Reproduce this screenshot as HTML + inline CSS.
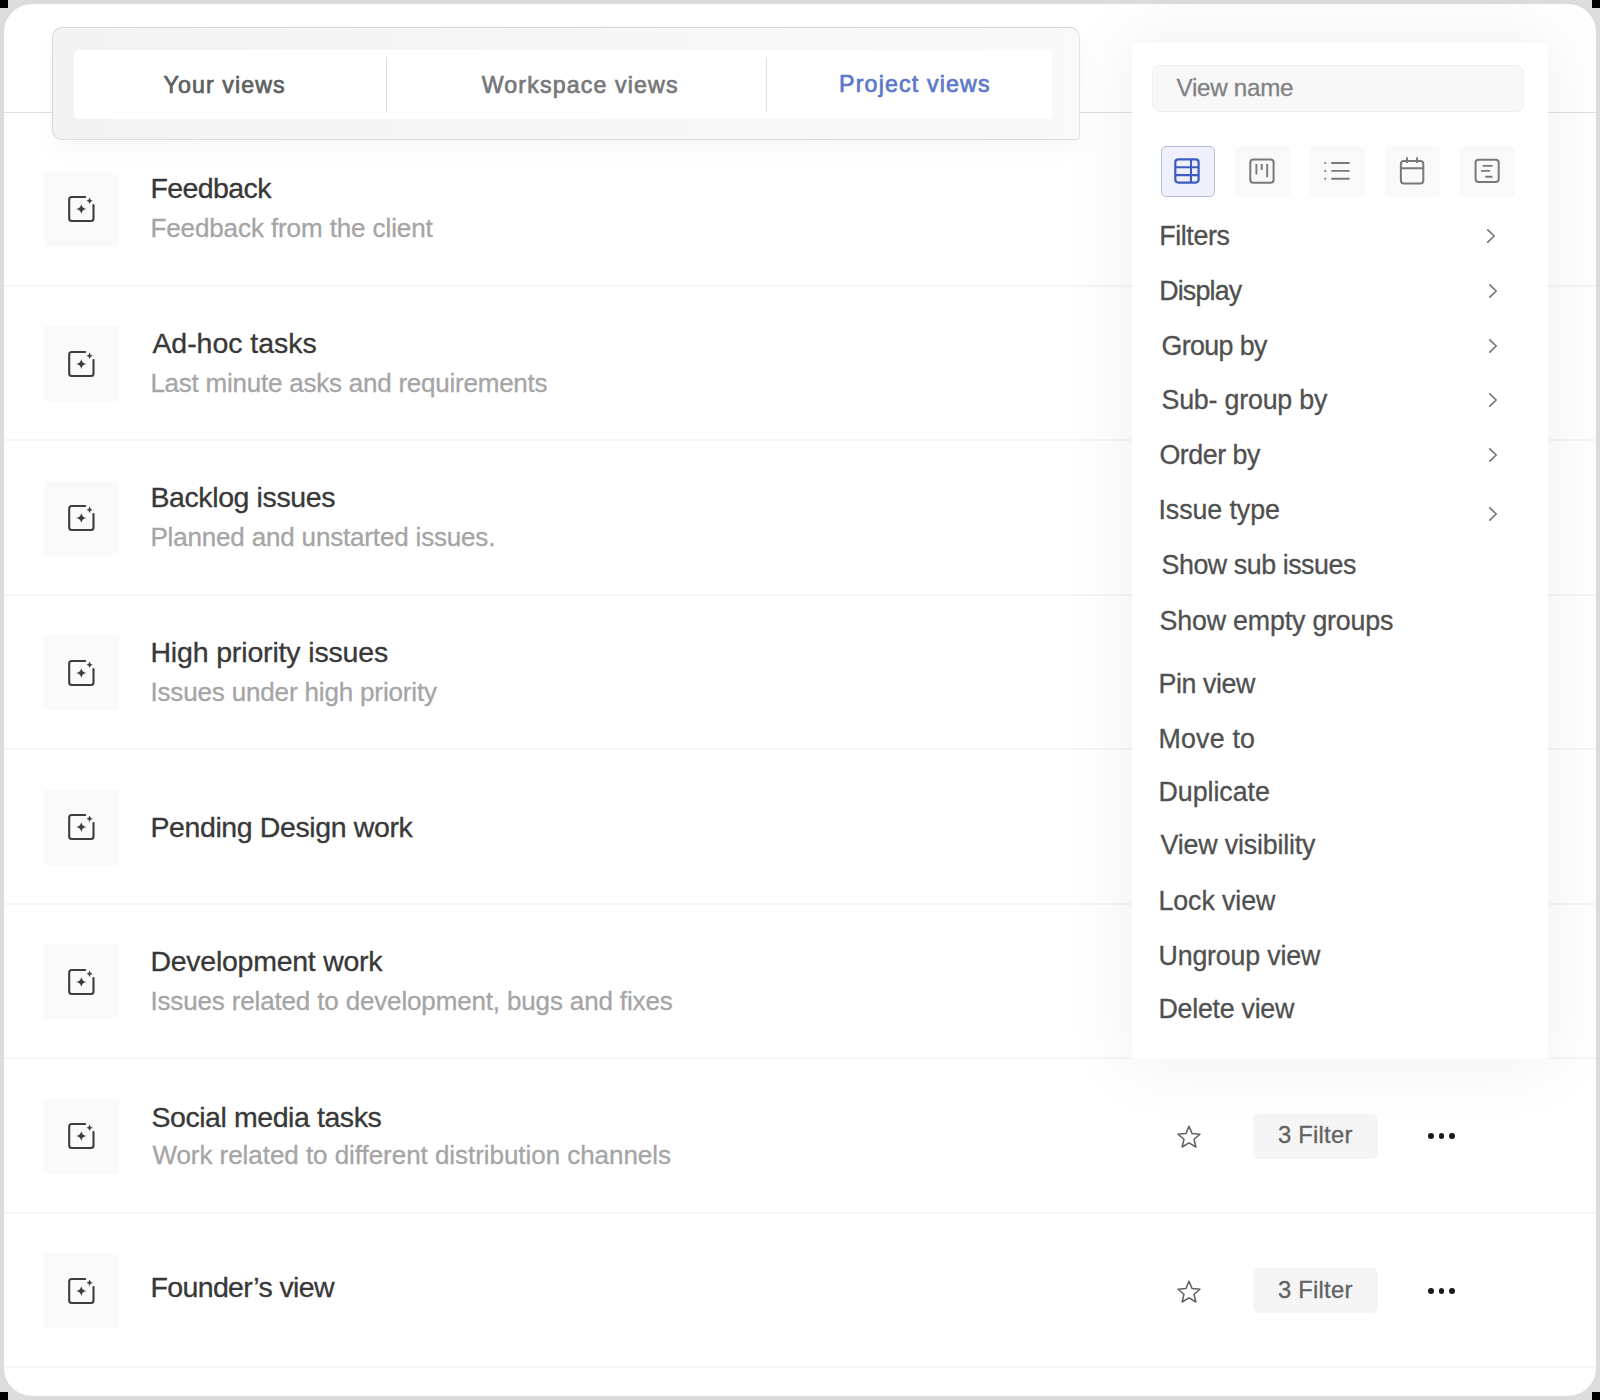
<!DOCTYPE html>
<html><head><meta charset="utf-8"><style>
*{margin:0;padding:0;box-sizing:border-box}
html,body{width:1600px;height:1400px;overflow:hidden;background:#dcdcdc;font-family:"Liberation Sans",sans-serif}
.corner{position:absolute;width:8px;height:8px;background:#000}
.card{position:absolute;left:4px;top:4px;width:1592px;height:1392px;background:#fff;border-radius:28px;overflow:hidden}
.t{position:absolute;white-space:nowrap;-webkit-text-stroke-width:0.3px}
.sep{position:absolute;left:4px;width:1592px;height:2px;background:#f6f6f6}
.ibox{position:absolute;left:44px;width:75px;height:75px;background:#fafafa;border-radius:2px}
.ric{position:absolute;left:60px}
.star{position:absolute;left:1175px}
.chip{position:absolute;left:1252.5px;width:125.5px;height:45px;background:#f5f5f5;border-radius:6px}
.dots{position:absolute;left:1427px;width:30px;height:6px}
.dots i{position:absolute;top:0;width:5.8px;height:5.8px;border-radius:50%;background:#1a1a1a}
.dots i:nth-child(1){left:1.1px} .dots i:nth-child(2){left:11.5px} .dots i:nth-child(3){left:22px}
.hdrline{position:absolute;left:4px;top:112px;width:1592px;height:1px;background:#e2e2e2}
.tabs{position:absolute;left:52px;top:27px;width:1028px;height:113px;background:linear-gradient(90deg,#f4f3f3,#f7f7f8 60%,#f9f9fa);border:1px solid #d6d4d4;border-right-color:#e4e4e6;border-bottom-color:#dcdcde;border-radius:10px 10px 4px 10px;box-shadow:0 10px 24px rgba(0,0,0,0.035)}
.tabin{position:absolute;left:74px;top:49.5px;width:978px;height:69.5px;background:#fff;border-radius:4px}
.vdiv{position:absolute;top:57px;width:1.6px;height:55px;background:#dedede}
.menu{position:absolute;left:1132px;top:43px;width:416px;height:1016px;background:#fff;border-radius:2px;box-shadow:0 0 70px 8px rgba(0,0,0,0.06)}
.inp{position:absolute;left:1152px;top:65px;width:372px;height:47px;background:#f8f8f8;border:1px solid #efefef;border-radius:8px}
.vb{position:absolute;top:145.5px;width:55px;height:51px;background:#f9f9fa;border-radius:5px}
.vb.sel{background:#eef0fb;border:1px solid #b4badf}

.chev{position:absolute;left:1483px}
</style></head><body>
<div class="corner" style="left:0;top:0"></div><div class="corner" style="right:0;top:0"></div>
<div class="corner" style="left:0;bottom:0"></div><div class="corner" style="right:0;bottom:0"></div>
<div class="card"></div>
<div class="hdrline"></div>
<div class="sep" style="top:285.0px"></div><div class="ibox" style="top:171.5px"></div><svg class="ric" style="top:189.0px" width="40" height="40" viewBox="0 0 40 40"><path d="M25.2 8.05 H11.7 a2.5 2.5 0 0 0 -2.5 2.5 V29.45 a2.5 2.5 0 0 0 2.5 2.5 H31 a2.5 2.5 0 0 0 2.5 -2.5 V16" fill="none" stroke="#3d3d3d" stroke-width="2.1" stroke-linecap="round"/><path d="M21.3 15.000000000000002 Q21.989 19.437 26.6 20.1 Q21.989 20.763 21.3 25.200000000000003 Q20.611 20.763 16.0 20.1 Q20.611 19.437 21.3 15.000000000000002 Z" fill="#3d3d3d"/><path d="M29.6 8.399999999999999 Q30.016000000000002 11.270999999999999 32.800000000000004 11.7 Q30.016000000000002 12.129 29.6 15.0 Q29.184 12.129 26.400000000000002 11.7 Q29.184 11.270999999999999 29.6 8.399999999999999 Z" fill="#3d3d3d"/></svg><div class="t" style="left:150.40px;top:174.37px;font-size:28.5px;line-height:28.5px;letter-spacing:-0.573px;color:#383838;">Feedback</div><div class="t" style="left:150.40px;top:215.19px;font-size:26px;line-height:26px;letter-spacing:-0.099px;color:#a5a5a5;">Feedback from the client</div><div class="sep" style="top:438.5px"></div><div class="ibox" style="top:326.0px"></div><svg class="ric" style="top:343.5px" width="40" height="40" viewBox="0 0 40 40"><path d="M25.2 8.05 H11.7 a2.5 2.5 0 0 0 -2.5 2.5 V29.45 a2.5 2.5 0 0 0 2.5 2.5 H31 a2.5 2.5 0 0 0 2.5 -2.5 V16" fill="none" stroke="#3d3d3d" stroke-width="2.1" stroke-linecap="round"/><path d="M21.3 15.000000000000002 Q21.989 19.437 26.6 20.1 Q21.989 20.763 21.3 25.200000000000003 Q20.611 20.763 16.0 20.1 Q20.611 19.437 21.3 15.000000000000002 Z" fill="#3d3d3d"/><path d="M29.6 8.399999999999999 Q30.016000000000002 11.270999999999999 32.800000000000004 11.7 Q30.016000000000002 12.129 29.6 15.0 Q29.184 12.129 26.400000000000002 11.7 Q29.184 11.270999999999999 29.6 8.399999999999999 Z" fill="#3d3d3d"/></svg><div class="t" style="left:152.40px;top:328.87px;font-size:28.5px;line-height:28.5px;letter-spacing:-0.044px;color:#383838;">Ad-hoc tasks</div><div class="t" style="left:150.40px;top:369.69px;font-size:26px;line-height:26px;letter-spacing:-0.233px;color:#a5a5a5;">Last minute asks and requirements</div><div class="sep" style="top:594.0px"></div><div class="ibox" style="top:480.5px"></div><svg class="ric" style="top:498.0px" width="40" height="40" viewBox="0 0 40 40"><path d="M25.2 8.05 H11.7 a2.5 2.5 0 0 0 -2.5 2.5 V29.45 a2.5 2.5 0 0 0 2.5 2.5 H31 a2.5 2.5 0 0 0 2.5 -2.5 V16" fill="none" stroke="#3d3d3d" stroke-width="2.1" stroke-linecap="round"/><path d="M21.3 15.000000000000002 Q21.989 19.437 26.6 20.1 Q21.989 20.763 21.3 25.200000000000003 Q20.611 20.763 16.0 20.1 Q20.611 19.437 21.3 15.000000000000002 Z" fill="#3d3d3d"/><path d="M29.6 8.399999999999999 Q30.016000000000002 11.270999999999999 32.800000000000004 11.7 Q30.016000000000002 12.129 29.6 15.0 Q29.184 12.129 26.400000000000002 11.7 Q29.184 11.270999999999999 29.6 8.399999999999999 Z" fill="#3d3d3d"/></svg><div class="t" style="left:150.40px;top:483.37px;font-size:28.5px;line-height:28.5px;letter-spacing:-0.388px;color:#383838;">Backlog issues</div><div class="t" style="left:150.40px;top:524.19px;font-size:26px;line-height:26px;letter-spacing:-0.170px;color:#a5a5a5;">Planned and unstarted issues.</div><div class="sep" style="top:748.1px"></div><div class="ibox" style="top:635.0px"></div><svg class="ric" style="top:652.5px" width="40" height="40" viewBox="0 0 40 40"><path d="M25.2 8.05 H11.7 a2.5 2.5 0 0 0 -2.5 2.5 V29.45 a2.5 2.5 0 0 0 2.5 2.5 H31 a2.5 2.5 0 0 0 2.5 -2.5 V16" fill="none" stroke="#3d3d3d" stroke-width="2.1" stroke-linecap="round"/><path d="M21.3 15.000000000000002 Q21.989 19.437 26.6 20.1 Q21.989 20.763 21.3 25.200000000000003 Q20.611 20.763 16.0 20.1 Q20.611 19.437 21.3 15.000000000000002 Z" fill="#3d3d3d"/><path d="M29.6 8.399999999999999 Q30.016000000000002 11.270999999999999 32.800000000000004 11.7 Q30.016000000000002 12.129 29.6 15.0 Q29.184 12.129 26.400000000000002 11.7 Q29.184 11.270999999999999 29.6 8.399999999999999 Z" fill="#3d3d3d"/></svg><div class="t" style="left:150.40px;top:637.87px;font-size:28.5px;line-height:28.5px;letter-spacing:-0.152px;color:#383838;">High priority issues</div><div class="t" style="left:150.40px;top:678.69px;font-size:26px;line-height:26px;letter-spacing:-0.155px;color:#a5a5a5;">Issues under high priority</div><div class="sep" style="top:902.9px"></div><div class="ibox" style="top:789.5px"></div><svg class="ric" style="top:807.0px" width="40" height="40" viewBox="0 0 40 40"><path d="M25.2 8.05 H11.7 a2.5 2.5 0 0 0 -2.5 2.5 V29.45 a2.5 2.5 0 0 0 2.5 2.5 H31 a2.5 2.5 0 0 0 2.5 -2.5 V16" fill="none" stroke="#3d3d3d" stroke-width="2.1" stroke-linecap="round"/><path d="M21.3 15.000000000000002 Q21.989 19.437 26.6 20.1 Q21.989 20.763 21.3 25.200000000000003 Q20.611 20.763 16.0 20.1 Q20.611 19.437 21.3 15.000000000000002 Z" fill="#3d3d3d"/><path d="M29.6 8.399999999999999 Q30.016000000000002 11.270999999999999 32.800000000000004 11.7 Q30.016000000000002 12.129 29.6 15.0 Q29.184 12.129 26.400000000000002 11.7 Q29.184 11.270999999999999 29.6 8.399999999999999 Z" fill="#3d3d3d"/></svg><div class="t" style="left:150.40px;top:812.67px;font-size:28.5px;line-height:28.5px;letter-spacing:-0.387px;color:#383838;">Pending Design work</div><div class="sep" style="top:1057.0px"></div><div class="ibox" style="top:944.0px"></div><svg class="ric" style="top:961.5px" width="40" height="40" viewBox="0 0 40 40"><path d="M25.2 8.05 H11.7 a2.5 2.5 0 0 0 -2.5 2.5 V29.45 a2.5 2.5 0 0 0 2.5 2.5 H31 a2.5 2.5 0 0 0 2.5 -2.5 V16" fill="none" stroke="#3d3d3d" stroke-width="2.1" stroke-linecap="round"/><path d="M21.3 15.000000000000002 Q21.989 19.437 26.6 20.1 Q21.989 20.763 21.3 25.200000000000003 Q20.611 20.763 16.0 20.1 Q20.611 19.437 21.3 15.000000000000002 Z" fill="#3d3d3d"/><path d="M29.6 8.399999999999999 Q30.016000000000002 11.270999999999999 32.800000000000004 11.7 Q30.016000000000002 12.129 29.6 15.0 Q29.184 12.129 26.400000000000002 11.7 Q29.184 11.270999999999999 29.6 8.399999999999999 Z" fill="#3d3d3d"/></svg><div class="t" style="left:150.40px;top:946.87px;font-size:28.5px;line-height:28.5px;letter-spacing:-0.258px;color:#383838;">Development work</div><div class="t" style="left:150.40px;top:987.69px;font-size:26px;line-height:26px;letter-spacing:-0.152px;color:#a5a5a5;">Issues related to development, bugs and fixes</div><div class="sep" style="top:1211.8px"></div><div class="ibox" style="top:1098.5px"></div><svg class="ric" style="top:1116.0px" width="40" height="40" viewBox="0 0 40 40"><path d="M25.2 8.05 H11.7 a2.5 2.5 0 0 0 -2.5 2.5 V29.45 a2.5 2.5 0 0 0 2.5 2.5 H31 a2.5 2.5 0 0 0 2.5 -2.5 V16" fill="none" stroke="#3d3d3d" stroke-width="2.1" stroke-linecap="round"/><path d="M21.3 15.000000000000002 Q21.989 19.437 26.6 20.1 Q21.989 20.763 21.3 25.200000000000003 Q20.611 20.763 16.0 20.1 Q20.611 19.437 21.3 15.000000000000002 Z" fill="#3d3d3d"/><path d="M29.6 8.399999999999999 Q30.016000000000002 11.270999999999999 32.800000000000004 11.7 Q30.016000000000002 12.129 29.6 15.0 Q29.184 12.129 26.400000000000002 11.7 Q29.184 11.270999999999999 29.6 8.399999999999999 Z" fill="#3d3d3d"/></svg><div class="t" style="left:151.40px;top:1103.17px;font-size:28.5px;line-height:28.5px;letter-spacing:-0.427px;color:#383838;">Social media tasks</div><div class="t" style="left:152.40px;top:1142.19px;font-size:26px;line-height:26px;letter-spacing:-0.047px;color:#a5a5a5;">Work related to different distribution channels</div><div class="sep" style="top:1366.2px"></div><div class="ibox" style="top:1253.0px"></div><svg class="ric" style="top:1270.5px" width="40" height="40" viewBox="0 0 40 40"><path d="M25.2 8.05 H11.7 a2.5 2.5 0 0 0 -2.5 2.5 V29.45 a2.5 2.5 0 0 0 2.5 2.5 H31 a2.5 2.5 0 0 0 2.5 -2.5 V16" fill="none" stroke="#3d3d3d" stroke-width="2.1" stroke-linecap="round"/><path d="M21.3 15.000000000000002 Q21.989 19.437 26.6 20.1 Q21.989 20.763 21.3 25.200000000000003 Q20.611 20.763 16.0 20.1 Q20.611 19.437 21.3 15.000000000000002 Z" fill="#3d3d3d"/><path d="M29.6 8.399999999999999 Q30.016000000000002 11.270999999999999 32.800000000000004 11.7 Q30.016000000000002 12.129 29.6 15.0 Q29.184 12.129 26.400000000000002 11.7 Q29.184 11.270999999999999 29.6 8.399999999999999 Z" fill="#3d3d3d"/></svg><div class="t" style="left:150.40px;top:1272.57px;font-size:28.5px;line-height:28.5px;letter-spacing:-0.617px;color:#383838;">Founder’s view</div><svg class="star" style="top:1124.0px" width="28" height="26" viewBox="0 0 28 26"><path d="M14 2.2 L17.1 9.6 L25 10.2 L19 15.3 L20.9 23 L14 18.8 L7.1 23 L9 15.3 L3 10.2 L10.9 9.6 Z" fill="none" stroke="#606060" stroke-width="1.5" stroke-linejoin="round"/></svg><div class="chip" style="top:1113.7px"></div><div class="t" style="left:1278.00px;top:1123.05px;font-size:23.8px;line-height:23.8px;letter-spacing:0.228px;color:#616161;">3 Filter</div><div class="dots" style="top:1133.4px"><i></i><i></i><i></i></div><svg class="star" style="top:1278.5px" width="28" height="26" viewBox="0 0 28 26"><path d="M14 2.2 L17.1 9.6 L25 10.2 L19 15.3 L20.9 23 L14 18.8 L7.1 23 L9 15.3 L3 10.2 L10.9 9.6 Z" fill="none" stroke="#606060" stroke-width="1.5" stroke-linejoin="round"/></svg><div class="chip" style="top:1268.2px"></div><div class="t" style="left:1278.00px;top:1277.55px;font-size:23.8px;line-height:23.8px;letter-spacing:0.228px;color:#616161;">3 Filter</div><div class="dots" style="top:1287.9px"><i></i><i></i><i></i></div>
<div class="tabs"></div>
<div class="tabin"></div>
<div class="vdiv" style="left:385.5px"></div>
<div class="vdiv" style="left:765.5px"></div>
<div class="t" style="left:163.60px;top:73.86px;font-size:23.2px;line-height:23.2px;letter-spacing:1.080px;color:#5d5f61;-webkit-text-stroke:0.7px #5d5f61;">Your views</div><div class="t" style="left:481.70px;top:73.86px;font-size:23.2px;line-height:23.2px;letter-spacing:1.137px;color:#76787a;-webkit-text-stroke:0.7px #76787a;">Workspace views</div><div class="t" style="left:839.10px;top:72.96px;font-size:23.2px;line-height:23.2px;letter-spacing:1.150px;color:#5b78c9;-webkit-text-stroke:0.7px #5b78c9;">Project views</div>
<div class="menu"></div>
<div class="inp"></div>
<div class="vb sel" style="left:1161px;width:54px"></div>
<div class="vb" style="left:1234.5px"></div>
<div class="vb" style="left:1309.5px"></div>
<div class="vb" style="left:1385px"></div>
<div class="vb" style="left:1460px"></div>
<svg style="position:absolute;left:1150px;top:140px" width="380" height="60" viewBox="0 0 380 60"><rect x="25.3" y="19.3" width="23.3" height="23.3" rx="3" fill="none" stroke="#3b5cc0" stroke-width="2.2"/><path d="M25.3 27.3 H48.6 M25.3 35.1 H48.6 M41 19.3 V42.6" stroke="#3b5cc0" stroke-width="2.1"/><rect x="100.3" y="19.6" width="23.3" height="23.1" rx="3" fill="none" stroke="#777a7c" stroke-width="2"/><path d="M106.4 24 V34.4 M111.7 24 V30.1 M117.2 24 V37.2" stroke="#777a7c" stroke-width="1.9"/><path d="M181.3 23 H199.6 M181.3 30.9 H199.6 M181.3 38.8 H199.6" stroke="#777a7c" stroke-width="1.9"/><circle cx="175.3" cy="23" r="1.05" fill="#777a7c"/><circle cx="175.3" cy="30.9" r="1.05" fill="#777a7c"/><circle cx="175.3" cy="38.8" r="1.05" fill="#777a7c"/><rect x="250.9" y="21.1" width="22.4" height="22.5" rx="3" fill="none" stroke="#777a7c" stroke-width="2"/><path d="M250.9 28.3 H273.3 M257 17.3 V23 M267.1 17.3 V23" stroke="#777a7c" stroke-width="1.9"/><rect x="325.6" y="19.7" width="23.1" height="22.4" rx="3" fill="none" stroke="#777a7c" stroke-width="2"/><path d="M332.5 25.9 H342.5 M331 30.9 H340 M335.3 36.7 H342.5" stroke="#777a7c" stroke-width="1.9"/></svg>
<div class="t" style="left:1159.20px;top:222.91px;font-size:26.8px;line-height:26.8px;letter-spacing:-0.375px;color:#505050;">Filters</div><svg class="chev" style="left:1483px;top:228.3px" width="16" height="16" viewBox="0 0 16 16"><path d="M4.8 1.8 L11.2 8 L4.8 14.2" fill="none" stroke="#777" stroke-width="1.7" stroke-linecap="round" stroke-linejoin="round"/></svg><div class="t" style="left:1159.20px;top:278.01px;font-size:26.8px;line-height:26.8px;letter-spacing:-0.811px;color:#505050;">Display</div><svg class="chev" style="left:1485.2px;top:283.4px" width="16" height="16" viewBox="0 0 16 16"><path d="M4.8 1.8 L11.2 8 L4.8 14.2" fill="none" stroke="#777" stroke-width="1.7" stroke-linecap="round" stroke-linejoin="round"/></svg><div class="t" style="left:1161.50px;top:332.91px;font-size:26.8px;line-height:26.8px;letter-spacing:-0.618px;color:#505050;">Group by</div><svg class="chev" style="left:1485.2px;top:338.3px" width="16" height="16" viewBox="0 0 16 16"><path d="M4.8 1.8 L11.2 8 L4.8 14.2" fill="none" stroke="#777" stroke-width="1.7" stroke-linecap="round" stroke-linejoin="round"/></svg><div class="t" style="left:1161.50px;top:386.71px;font-size:26.8px;line-height:26.8px;letter-spacing:-0.203px;color:#505050;">Sub- group by</div><svg class="chev" style="left:1485.2px;top:392.1px" width="16" height="16" viewBox="0 0 16 16"><path d="M4.8 1.8 L11.2 8 L4.8 14.2" fill="none" stroke="#777" stroke-width="1.7" stroke-linecap="round" stroke-linejoin="round"/></svg><div class="t" style="left:1159.50px;top:441.71px;font-size:26.8px;line-height:26.8px;letter-spacing:-0.478px;color:#505050;">Order by</div><svg class="chev" style="left:1485.2px;top:447.1px" width="16" height="16" viewBox="0 0 16 16"><path d="M4.8 1.8 L11.2 8 L4.8 14.2" fill="none" stroke="#777" stroke-width="1.7" stroke-linecap="round" stroke-linejoin="round"/></svg><div class="t" style="left:1158.50px;top:497.31px;font-size:26.8px;line-height:26.8px;letter-spacing:-0.082px;color:#505050;">Issue type</div><svg class="chev" style="left:1485.2px;top:506.2px" width="16" height="16" viewBox="0 0 16 16"><path d="M4.8 1.8 L11.2 8 L4.8 14.2" fill="none" stroke="#777" stroke-width="1.7" stroke-linecap="round" stroke-linejoin="round"/></svg><div class="t" style="left:1161.50px;top:552.31px;font-size:26.8px;line-height:26.8px;letter-spacing:-0.442px;color:#505050;">Show sub issues</div><div class="t" style="left:1159.50px;top:607.51px;font-size:26.8px;line-height:26.8px;letter-spacing:-0.183px;color:#505050;">Show empty groups</div><div class="t" style="left:1158.50px;top:670.71px;font-size:26.8px;line-height:26.8px;letter-spacing:-0.419px;color:#505050;">Pin view</div><div class="t" style="left:1158.50px;top:725.81px;font-size:26.8px;line-height:26.8px;letter-spacing:0.181px;color:#505050;">Move to</div><div class="t" style="left:1158.50px;top:778.91px;font-size:26.8px;line-height:26.8px;letter-spacing:-0.039px;color:#505050;">Duplicate</div><div class="t" style="left:1160.50px;top:832.11px;font-size:26.8px;line-height:26.8px;letter-spacing:-0.175px;color:#505050;">View visibility</div><div class="t" style="left:1158.50px;top:887.71px;font-size:26.8px;line-height:26.8px;letter-spacing:-0.100px;color:#505050;">Lock view</div><div class="t" style="left:1158.50px;top:943.01px;font-size:26.8px;line-height:26.8px;letter-spacing:-0.181px;color:#505050;">Ungroup view</div><div class="t" style="left:1158.50px;top:996.11px;font-size:26.8px;line-height:26.8px;letter-spacing:-0.266px;color:#505050;">Delete view</div><div class="t" style="left:1176.50px;top:75.81px;font-size:24.2px;line-height:24.2px;letter-spacing:-0.283px;color:#808284;">View name</div>
</body></html>
